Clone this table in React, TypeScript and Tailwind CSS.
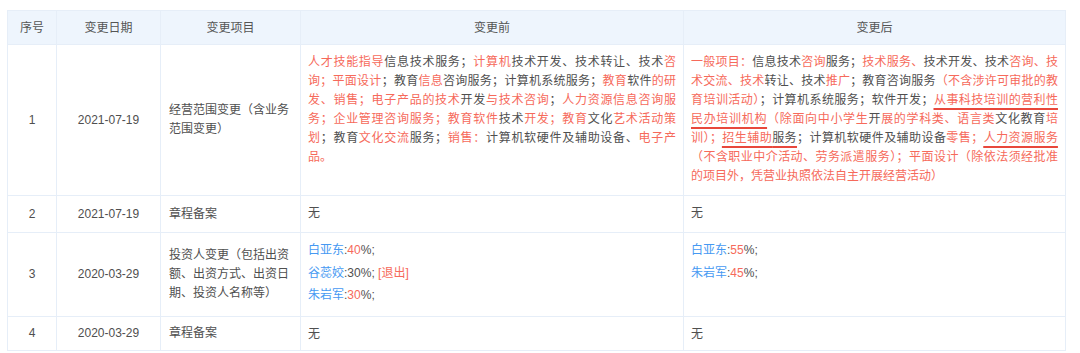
import React from 'react';

type Tone = 'r' | 'g' | 'ru' | 'gu';
type Seg = [string, Tone];

const tone: Record<Tone, string> = {
  r: 'text-[#f66a5b]',
  g: 'text-[#4f4f4f]',
  ru: 'text-[#f66a5b] underline decoration-[#e8483c] decoration-[1.5px] underline-offset-[4px]',
  gu: 'text-[#4f4f4f] underline decoration-[#e8483c] decoration-[1.5px] underline-offset-[4px]',
};

const scopeBefore: Seg[][] = [
  [['人才技能指导', 'r'], ['信息技术服务；', 'g'], ['计算机', 'r'], ['技术开发、技术转让、技术', 'g'], ['咨', 'r']],
  [['询；平面设计', 'r'], ['；教育', 'g'], ['信息', 'r'], ['咨询服务；计算机系统服务；', 'g'], ['教育', 'r'], ['软件', 'g'], ['的研', 'r']],
  [['发、销售；电子产品的技术', 'r'], ['开发', 'g'], ['与技术咨询', 'r'], ['；', 'g'], ['人力资源信息咨询服', 'r']],
  [['务；企业管理咨询服务；教育软件', 'r'], ['技术', 'g'], ['开发；教育', 'r'], ['文化', 'g'], ['艺术活动策', 'r']],
  [['划', 'r'], ['；教育', 'g'], ['文化交流', 'r'], ['服务；', 'g'], ['销售：', 'r'], ['计算机软硬件及辅助设备、', 'g'], ['电子产', 'r']],
  [['品。', 'r']],
];

const scopeAfter: Seg[][] = [
  [['一般项目：', 'r'], ['信息技术', 'g'], ['咨询', 'r'], ['服务；', 'g'], ['技术服务、', 'r'], ['技术开发、技术', 'g'], ['咨询、技', 'r']],
  [['术交流、技术', 'r'], ['转让、技术', 'g'], ['推广', 'r'], ['；教育咨询服务', 'g'], ['（不含涉许可审批的教', 'r']],
  [['育培训活动）', 'r'], ['；计算机系统服务；软件开发；', 'g'], ['从事科技培训的营利性', 'ru']],
  [['民办培训机构', 'ru'], ['（除面向中小学生', 'r'], ['开', 'g'], ['展的学科类、语言类', 'r'], ['文化教育', 'g'], ['培', 'r']],
  [['训）；', 'r'], ['招生辅助', 'ru'], ['服务', 'gu'], ['；计算机软硬件及辅助设备', 'g'], ['零售；', 'r'], ['人力资源服务', 'ru']],
  [['（不含职业中介活动、劳务派遣服务）；平面设计（除依法须经批准', 'r']],
  [['的项目外，凭营业执照依法自主开展经营活动）', 'r']],
];

function Lines({ lines }: { lines: Seg[][] }) {
  return (
    <>
      {lines.map((line, i) => (
        <div
          key={i}
          className={i < lines.length - 1 ? 'whitespace-nowrap [text-align-last:justify] text-justify' : 'whitespace-nowrap'}
        >
          {line.map(([text, t], j) => (
            <span key={j} className={tone[t]}>
              {text}
            </span>
          ))}
        </div>
      ))}
    </>
  );
}

function Holder({ name, share, note }: { name: string; share: string; note?: 'red' | 'quit' }) {
  return (
    <div className="leading-[22.5px]">
      <span className="text-[#4699f2]">{name}</span>
      <span className="text-[#4f4f4f]">:</span>
      {note === 'quit' ? (
        <>
          <span className="text-[#4f4f4f]">{share}%; </span>
          <span className="text-[#f66a5b]">[退出]</span>
        </>
      ) : (
        <>
          <span className="text-[#f66a5b]">{share}</span>
          <span className="text-[#4f4f4f]">%;</span>
        </>
      )}
    </div>
  );
}

const bd = 'border border-[#e6eef8]';

export default function App() {
  return (
    <div className="min-h-[353px] bg-white pt-[10px] pl-[7px] font-[Liberation_Sans,Noto_Sans_CJK_SC,sans-serif] text-[12px] text-[#4f4f4f]">
      <table className="w-[1058px] table-fixed border-collapse">
        <colgroup>
          <col className="w-[49px]" />
          <col className="w-[104px]" />
          <col className="w-[140px]" />
          <col className="w-[383px]" />
          <col className="w-[382px]" />
        </colgroup>
        <thead>
          <tr className="h-[34px] bg-[#eef5fd]">
            {['序号', '变更日期', '变更项目', '变更前', '变更后'].map((h) => (
              <th key={h} className={`${bd} text-center font-normal text-[#555]`}>
                {h}
              </th>
            ))}
          </tr>
        </thead>
        <tbody className="leading-[19px]">
          <tr>
            <td className={`${bd} text-center align-middle`}>1</td>
            <td className={`${bd} text-center align-middle`}>2021-07-19</td>
            <td className={`${bd} px-[8px] align-middle`}>经营范围变更（含业务范围变更）</td>
            <td className={`${bd} px-[7px] pt-[8px] pb-[9px] align-top`}>
              <Lines lines={scopeBefore} />
            </td>
            <td className={`${bd} px-[7px] pt-[8px] pb-[9px] align-top`}>
              <Lines lines={scopeAfter} />
            </td>
          </tr>
          <tr>
            <td className={`${bd} text-center align-middle`}>2</td>
            <td className={`${bd} text-center align-middle`}>2021-07-19</td>
            <td className={`${bd} px-[8px] align-middle`}>章程备案</td>
            <td className={`${bd} px-[7px] pt-[8px] pb-[9px] align-top`}>无</td>
            <td className={`${bd} px-[7px] pt-[8px] pb-[9px] align-top`}>无</td>
          </tr>
          <tr>
            <td className={`${bd} text-center align-middle`}>3</td>
            <td className={`${bd} text-center align-middle`}>2020-03-29</td>
            <td className={`${bd} px-[8px] align-middle`}>投资人变更（包括出资额、出资方式、出资日期、投资人名称等）</td>
            <td className={`${bd} px-[7px] pt-[6px] pb-[9px] align-top`}>
              <Holder name="白亚东" share="40" />
              <Holder name="谷蕊姣" share="30" note="quit" />
              <Holder name="朱岩军" share="30" />
            </td>
            <td className={`${bd} px-[7px] pt-[6px] pb-[9px] align-top`}>
              <Holder name="白亚东" share="55" />
              <Holder name="朱岩军" share="45" />
            </td>
          </tr>
          <tr>
            <td className={`${bd} text-center align-middle`}>4</td>
            <td className={`${bd} text-center align-middle`}>2020-03-29</td>
            <td className={`${bd} px-[8px] align-middle`}>章程备案</td>
            <td className={`${bd} px-[7px] pt-[8px] pb-[6px] align-top`}>无</td>
            <td className={`${bd} px-[7px] pt-[8px] pb-[6px] align-top`}>无</td>
          </tr>
        </tbody>
      </table>
    </div>
  );
}
